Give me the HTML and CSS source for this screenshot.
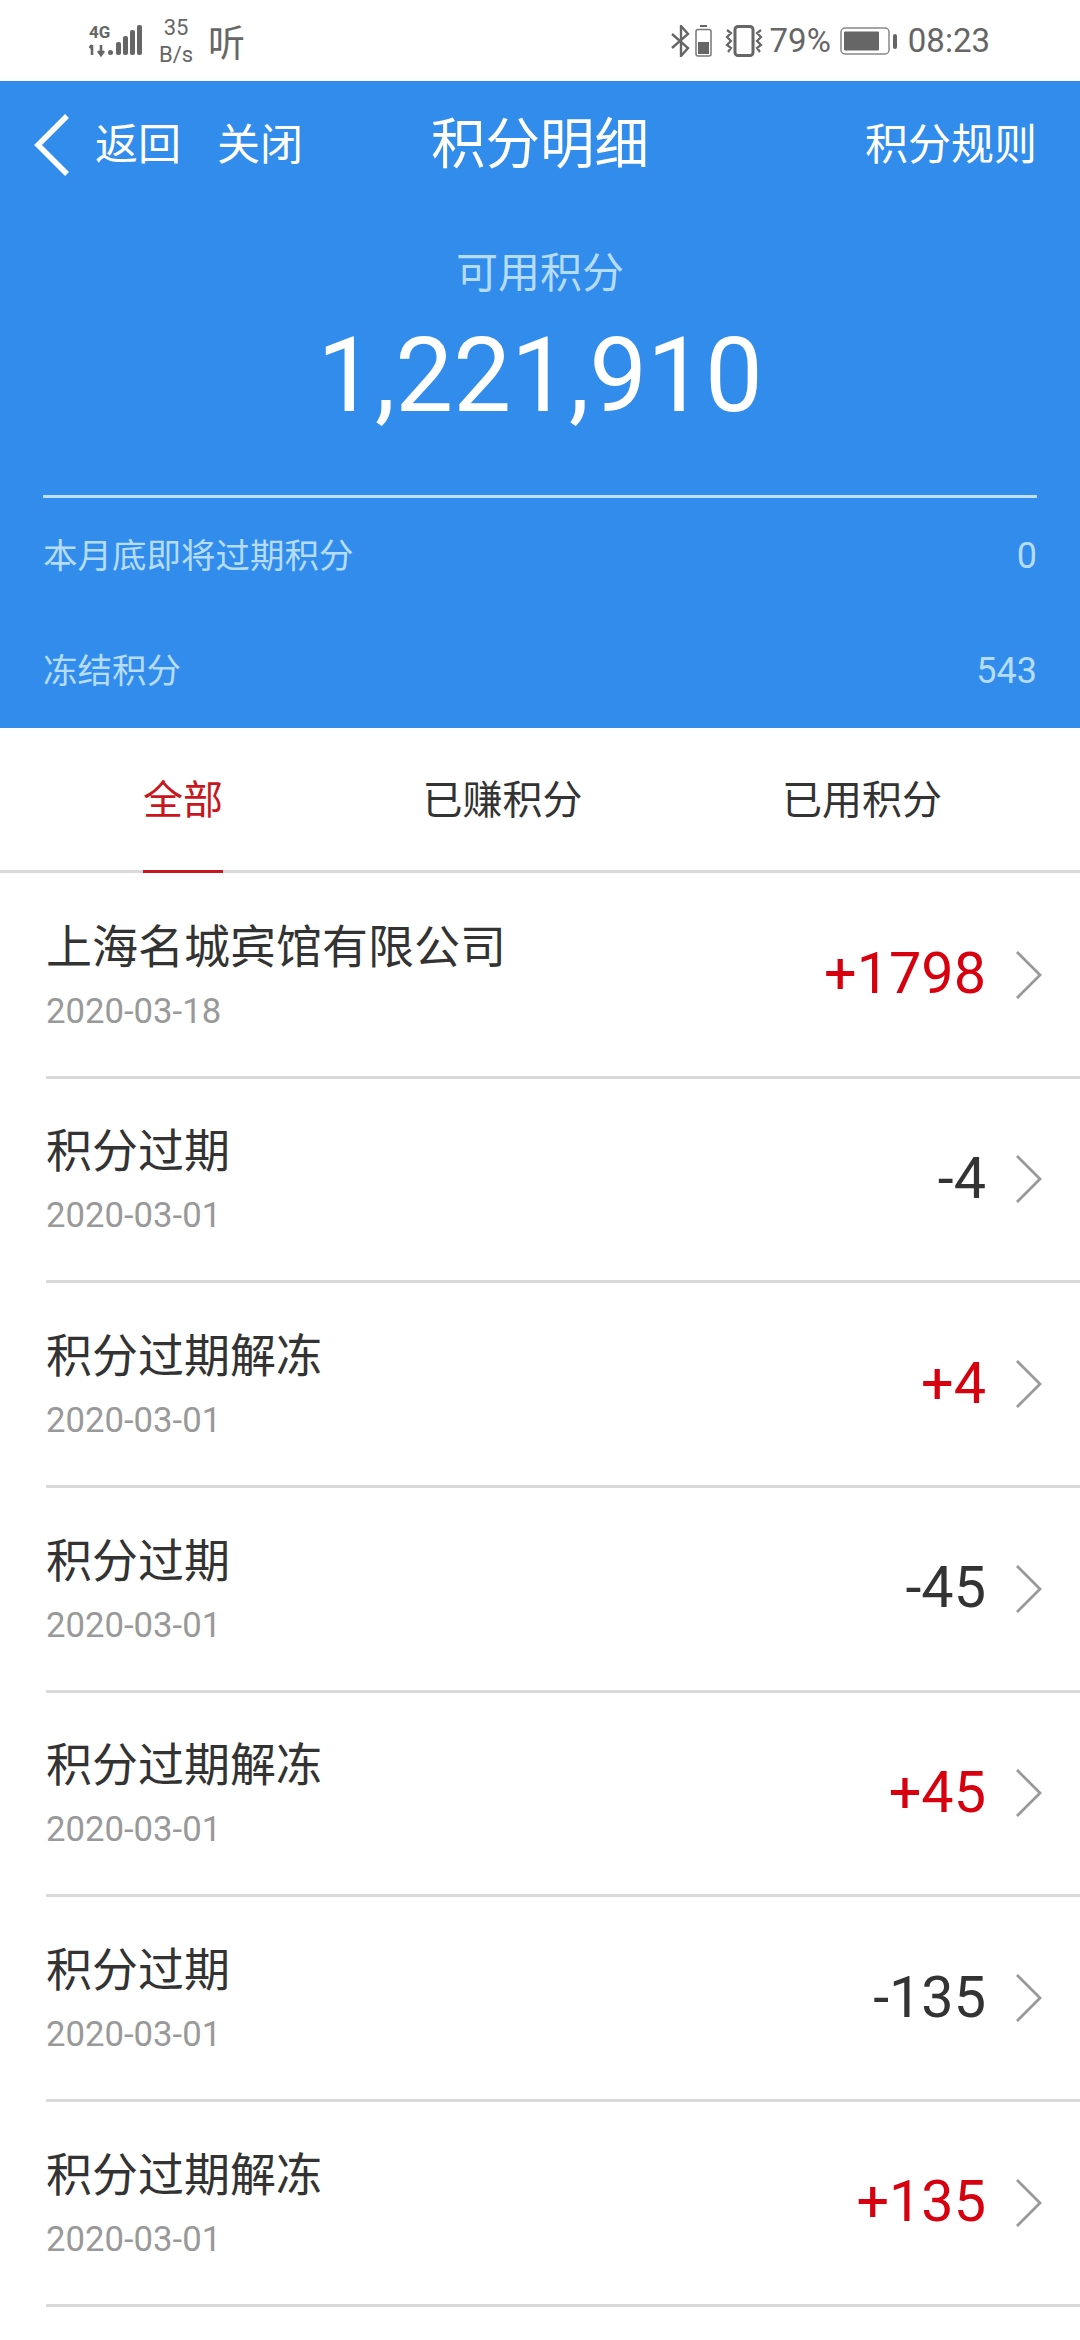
FILE: index.html
```html
<!DOCTYPE html>
<html lang="zh-CN">
<head>
<meta charset="utf-8">
<title>积分明细</title>
<link rel="stylesheet" href="styles.css">
</head>
<body>
<div class="page">
  <div class="status">
    <div class="status-left">
      <svg class="sig" width="58" height="40" viewBox="0 -4 58 40">
        <text x="0" y="13" class="sig-4g">4G</text>
        <path d="M3 20v10M0.500 23l2.500-3M12 20v10M9 26l3 4 3-4" fill="none" stroke="#666" stroke-width="2.600"/>
        <rect x="19" y="25" width="5" height="5" rx="2.500" fill="#666"/>
        <rect x="27" y="17" width="5" height="13" rx="2" fill="#666"/>
        <rect x="34" y="11" width="5" height="19" rx="2" fill="#666"/>
        <rect x="41" y="5" width="5" height="25" rx="2" fill="#666"/>
        <rect x="48" y="0" width="5" height="30" rx="2" fill="#666"/>
      </svg>
      <div class="speed"><span>35</span><span>B/s</span></div>
      <span class="ting">听</span>
    </div>
    <div class="status-right">
      <svg width="20" height="32" viewBox="0 0 20 32"><path d="M1 9l16 14-7 8V1l7 8L1 23" fill="none" stroke="#666" stroke-width="2.400"/></svg>
      <svg class="mini-batt" width="18" height="32" viewBox="0 0 18 32"><rect x="5" y="0" width="7" height="2" fill="#666"/><rect x="1" y="4.500" width="15" height="26.500" rx="2" fill="none" stroke="#777" stroke-width="1.500"/><rect x="3" y="17" width="11" height="12" fill="#666"/></svg>
      <svg class="vib" width="40" height="32" viewBox="0 0 40 32"><rect x="11" y="1.500" width="18" height="29" rx="3" fill="none" stroke="#666" stroke-width="3"/><path d="M3 5l4 3-4 4 4 4-4 4 4 3-3 4M37 5l-4 3 4 4-4 4 4 4-4 3 3 4" fill="none" stroke="#666" stroke-width="2.200"/></svg>
      <span class="pct">79%</span>
      <svg class="batt" width="57" height="28" viewBox="0 0 57 28"><rect x="1" y="1" width="48" height="26" rx="4" fill="none" stroke="#888" stroke-width="1.500"/><rect x="4" y="4.500" width="35" height="19" rx="1" fill="#666"/><rect x="53" y="7" width="4" height="15" rx="2" fill="#666"/></svg>
      <span class="time">08:23</span>
    </div>
  </div>

  <header class="hero">
    <nav class="nav">
      <div class="nav-left">
        <svg class="back" width="36" height="64" viewBox="0 0 36 64"><path d="M33 3L4 32l29 29" fill="none" stroke="#fff" stroke-width="5.500"/></svg>
        <span class="nav-link">返回</span>
        <span class="nav-link">关闭</span>
      </div>
      <h1 class="nav-title">积分明细</h1>
      <span class="nav-rule">积分规则</span>
    </nav>
    <div class="balance">
      <div class="balance-label">可用积分</div>
      <div class="balance-value">1,221,910</div>
    </div>
    <div class="meta">
      <div class="meta-row"><span class="meta-label">本月底即将过期积分</span><span class="meta-num">0</span></div>
      <div class="meta-row"><span class="meta-label">冻结积分</span><span class="meta-num">543</span></div>
    </div>
  </header>

  <div class="tabs">
    <span class="tab active">全部</span>
    <span class="tab">已赚积分</span>
    <span class="tab">已用积分</span>
  </div>

  <ul class="list">
    <li class="row"><div class="info"><div class="name">上海名城宾馆有限公司</div><div class="date">2020-03-18</div></div><span class="amt plus">+1798</span><svg class="chev" width="28" height="50" viewBox="0 0 28 50"><path d="M2 2l23 23L2 48" fill="none" stroke="#999" stroke-width="2.800"/></svg></li>
    <li class="row"><div class="info"><div class="name">积分过期</div><div class="date">2020-03-01</div></div><span class="amt">-4</span><svg class="chev" width="28" height="50" viewBox="0 0 28 50"><path d="M2 2l23 23L2 48" fill="none" stroke="#999" stroke-width="2.800"/></svg></li>
    <li class="row"><div class="info"><div class="name">积分过期解冻</div><div class="date">2020-03-01</div></div><span class="amt plus">+4</span><svg class="chev" width="28" height="50" viewBox="0 0 28 50"><path d="M2 2l23 23L2 48" fill="none" stroke="#999" stroke-width="2.800"/></svg></li>
    <li class="row"><div class="info"><div class="name">积分过期</div><div class="date">2020-03-01</div></div><span class="amt">-45</span><svg class="chev" width="28" height="50" viewBox="0 0 28 50"><path d="M2 2l23 23L2 48" fill="none" stroke="#999" stroke-width="2.800"/></svg></li>
    <li class="row"><div class="info"><div class="name">积分过期解冻</div><div class="date">2020-03-01</div></div><span class="amt plus">+45</span><svg class="chev" width="28" height="50" viewBox="0 0 28 50"><path d="M2 2l23 23L2 48" fill="none" stroke="#999" stroke-width="2.800"/></svg></li>
    <li class="row"><div class="info"><div class="name">积分过期</div><div class="date">2020-03-01</div></div><span class="amt">-135</span><svg class="chev" width="28" height="50" viewBox="0 0 28 50"><path d="M2 2l23 23L2 48" fill="none" stroke="#999" stroke-width="2.800"/></svg></li>
    <li class="row"><div class="info"><div class="name">积分过期解冻</div><div class="date">2020-03-01</div></div><span class="amt plus">+135</span><svg class="chev" width="28" height="50" viewBox="0 0 28 50"><path d="M2 2l23 23L2 48" fill="none" stroke="#999" stroke-width="2.800"/></svg></li>
  </ul>
</div>
</body>
</html>
```

FILE: styles.css
```css
* { box-sizing: border-box; margin: 0; padding: 0; }
html, body { background: #fff; }
body { width: 1080px; height: 2340px; overflow: hidden; font-family: Roboto, "Noto Sans CJK SC", sans-serif; color: #333; }
.page { width: 1080px; height: 2340px; display: flex; flex-direction: column; }

.status { height: 81px; flex: none; display: flex; justify-content: space-between; align-items: center; padding: 0 90px 0 89px; color: #666; }
.status-left, .status-right { display: flex; align-items: center; }
.sig { display: block; }
.sig-4g { font: 700 17px "Roboto", sans-serif; fill: #666; }
.speed { display: flex; flex-direction: column; align-items: center; font-size: 22px; line-height: 27px; margin-left: 7px; width: 44px; }
.ting { font: 37px/40px "Noto Sans CJK SC", sans-serif; margin-left: 10px; }
.mini-batt { margin-left: 4px; }
.vib { margin-left: 11px; }
.pct { font-size: 33px; margin-left: 6px; }
.batt { margin-left: 9px; }
.time { font-size: 33px; margin-left: 11px; }

.hero { height: 647px; flex: none; background: #318ceb; color: #fff; padding: 0 43px; display: flex; flex-direction: column; }
.nav { height: 128px; flex: none; display: grid; grid-template-columns: 1fr auto 1fr; align-items: center; }
.nav-left { display: flex; align-items: center; margin-left: -9px; }
.back { margin-right: 25px; }
.nav-link { font-size: 43px; margin-right: 36px; padding-bottom: 9px; }
.nav-title { font-size: 54.500px; font-weight: 400; padding-bottom: 11px; }
.nav-rule { font-size: 43px; justify-self: end; padding-bottom: 9px; }
.balance { text-align: center; height: 287px; padding-top: 35px; }
.balance-label { font-size: 42px; line-height: 60px; color: #b5dcfa; }
.balance-value { font-size: 103px; line-height: 120px; margin-top: 12px; }
.meta { border-top: 3px solid #bfe0fa; display: flex; flex-direction: column; color: #b5dcfa; font-size: 34.500px; }
.meta-row { height: 115px; display: flex; justify-content: space-between; align-items: center; }
.meta-label { padding-bottom: 6px; }
.meta-num { font-size: 36px; }

.tabs { height: 145px; flex: none; display: flex; gap: 199.500px; padding-left: 143px; border-bottom: 3px solid #d9d9d9; }
.tab { font-size: 40px; line-height: 146px; height: 145px; color: #333; }
.tab.active { color: #c8161d; border-bottom: 3px solid #c8161d; }

.list { list-style: none; margin: 1px 0 0 46px; }
.row { height: 204.670px; display: flex; align-items: center; border-bottom: 3px solid #d9d9d9; padding-right: 37px; }
.info { flex: 1; padding-bottom: 2px; }
.name { font-size: 46px; line-height: 60px; }
.date { font-size: 34.700px; line-height: 40px; margin-top: 14px; color: #999; }
.amt { font-size: 57.500px; color: #333; margin-right: 29px; padding-bottom: 2px; }
.amt.plus { color: #d7000f; }
.chev { display: block; }
```
